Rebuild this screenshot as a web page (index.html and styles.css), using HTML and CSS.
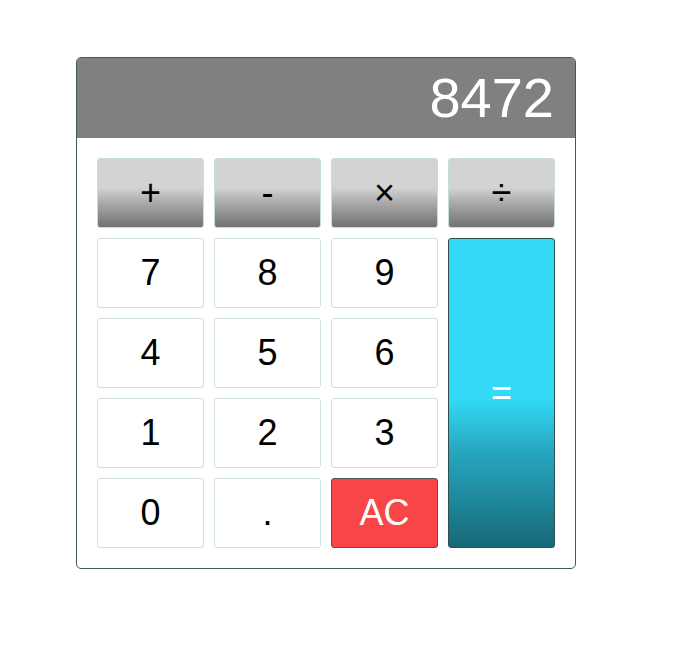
FILE: index.html
```html
<!DOCTYPE html>
<html>
<head>
<meta charset="utf-8">
<link rel="stylesheet" href="styles.css">
</head>
<body>
<div class="calc">
  <div class="display">8472</div>
  <div class="keys">
    <button class="key op">+</button>
    <button class="key op">-</button>
    <button class="key op">×</button>
    <button class="key op">÷</button>
    <button class="key">7</button>
    <button class="key">8</button>
    <button class="key">9</button>
    <button class="key eq">=</button>
    <button class="key">4</button>
    <button class="key">5</button>
    <button class="key">6</button>
    <button class="key">1</button>
    <button class="key">2</button>
    <button class="key">3</button>
    <button class="key">0</button>
    <button class="key">.</button>
    <button class="key ac">AC</button>
  </div>
</div>
</body>
</html>
```
FILE: styles.css
```css
html, body {
  margin: 0;
  padding: 0;
  background: #ffffff;
}
body {
  padding: 57px 0 0 76px;
  font-family: "Liberation Sans", Arial, sans-serif;
}
.calc {
  width: 498px;
  border: 1px solid #3d5c5c;
  border-radius: 5px;
  overflow: hidden;
  background: #ffffff;
}
.display {
  height: 80px;
  background: #808080;
  color: #ffffff;
  font-size: 56px;
  line-height: 80px;
  text-align: right;
  padding: 0 21px 0 21px;
}
.keys {
  display: grid;
  grid-template-columns: repeat(4, 107px);
  grid-template-rows: repeat(5, 70px);
  gap: 10px;
  padding: 20px;
}
.key {
  box-sizing: border-box;
  margin: 0;
  padding: 0;
  border: 1px solid #cfe0e0;
  border-radius: 3px;
  background: #ffffff;
  color: #000000;
  font-family: "Liberation Sans", Arial, sans-serif;
  font-size: 36px;
  line-height: 1;
  cursor: pointer;
}
.op {
  background: linear-gradient(to bottom, #d3d3d3 0%, #d3d3d3 42%, #a9a9a9 65%, #717171 100%);
  border-color: #c9dcdc;
}
.eq {
  grid-column: 4;
  grid-row: 2 / span 4;
  color: #ffffff;
  border-color: #2f4f4f;
  background: linear-gradient(to bottom, #33d9f6 0%, #33d9f6 52%, #27a9c2 68%, #176878 100%);
}
.ac {
  background: #f74548;
  color: #ffffff;
  border-color: #4a5a5a;
}
```
